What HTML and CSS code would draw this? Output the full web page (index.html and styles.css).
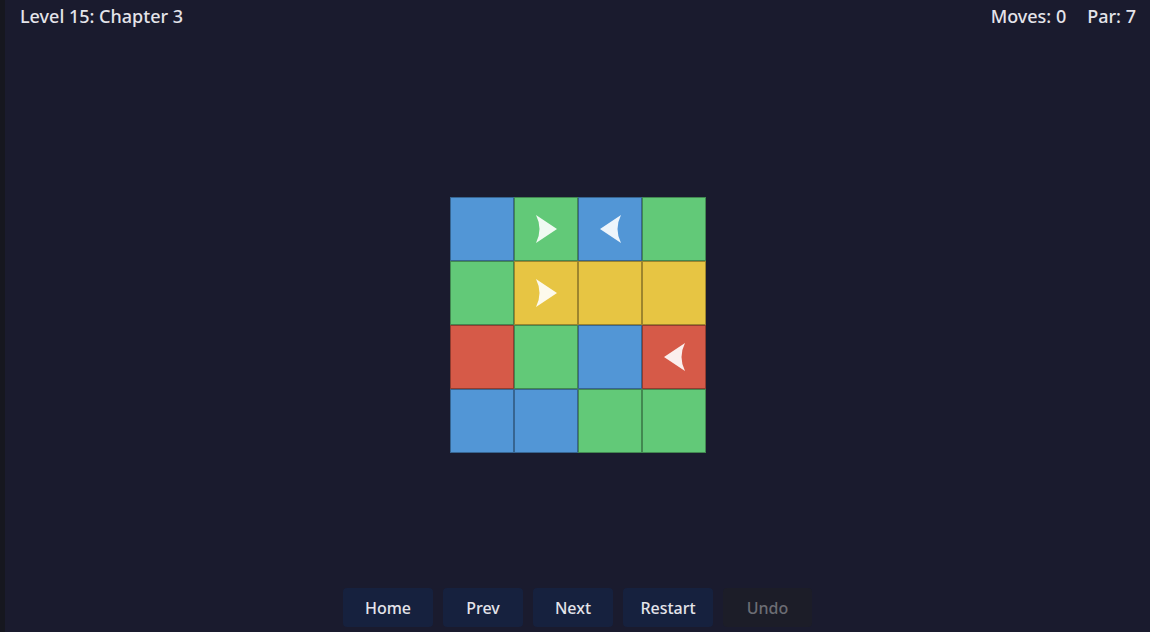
FILE: index.html
```html
<!DOCTYPE html>
<html>
<head>
<meta charset="utf-8">
<link rel="stylesheet" href="styles.css">
</head>
<body>
<div class="app">
  <div class="strip"></div>
  <div class="screen">
    <header class="topbar">
      <div class="title">Level 15: Chapter 3</div>
      <div class="stats"><span>Moves: 0</span><span>Par: 7</span></div>
    </header>
    <main class="board-area">
      <div class="board">
        <div class="cell blue"></div>
        <div class="cell green"><svg class="arrow" viewBox="0 0 21 28"><path d="M0 0 L21 14 L0 28 Q7 14 0 0 Z"/></svg></div>
        <div class="cell blue"><svg class="arrow left" viewBox="0 0 21 28"><path d="M21 0 L0 14 L21 28 Q14 14 21 0 Z"/></svg></div>
        <div class="cell green"></div>
        <div class="cell green"></div>
        <div class="cell yellow"><svg class="arrow" viewBox="0 0 21 28"><path d="M0 0 L21 14 L0 28 Q7 14 0 0 Z"/></svg></div>
        <div class="cell yellow"></div>
        <div class="cell yellow"></div>
        <div class="cell red"></div>
        <div class="cell green"></div>
        <div class="cell blue"></div>
        <div class="cell red"><svg class="arrow left" viewBox="0 0 21 28"><path d="M21 0 L0 14 L21 28 Q14 14 21 0 Z"/></svg></div>
        <div class="cell blue"></div>
        <div class="cell blue"></div>
        <div class="cell green"></div>
        <div class="cell green"></div>
      </div>
    </main>
    <footer class="controls">
      <button class="btn w90">Home</button>
      <button class="btn w80">Prev</button>
      <button class="btn w80">Next</button>
      <button class="btn w90">Restart</button>
      <button class="btn w89 disabled">Undo</button>
    </footer>
  </div>
</div>
</body>
</html>
```
FILE: styles.css
```css
* { box-sizing: border-box; }
html, body { margin: 0; padding: 0; }
body {
  width: 1150px;
  height: 632px;
  overflow: hidden;
  background: #1a1b2e;
  font-family: "Noto Sans", "Open Sans", sans-serif;
  color: #e4e4ea;
}
.app { display: flex; height: 632px; }
.strip { width: 5px; background: #16171f; }
.screen { flex: 1; display: flex; flex-direction: column; }
.topbar {
  height: 36px;
  display: flex;
  justify-content: space-between;
  align-items: flex-start;
  padding: 4px 14px 0 15px;
  font-size: 18px;
  font-weight: 500;
}
.stats { display: flex; gap: 21px; }
.board-area {
  flex: 1;
  display: flex;
  align-items: center;
  justify-content: center;
  padding-top: 34px;
  padding-left: 1px;
}
.board {
  display: grid;
  grid-template-columns: repeat(4, 64px);
  grid-template-rows: repeat(4, 64px);
}
.cell {
  border: 1px solid rgba(0, 0, 0, 0.32);
  display: flex;
  align-items: center;
  justify-content: center;
}
.blue { background: #5296d6; }
.green { background: #62c978; }
.yellow { background: #e7c543; }
.red { background: #d65a48; }
.arrow { width: 21px; height: 28px; fill: rgba(255, 255, 255, 0.9); }
.controls {
  display: flex;
  justify-content: center;
  gap: 10px;
  padding: 8px 0 5px 0;
}
.btn {
  height: 39px;
  border: none;
  border-radius: 4px;
  background: #16213e;
  color: #e4e4ea;
  font-family: "Noto Sans", "Open Sans", sans-serif;
  font-size: 16px;
  font-weight: 500;
  padding: 0;
}
.w90 { width: 90px; }
.w80 { width: 80px; }
.w89 { width: 89px; }
.btn.disabled { background: #1c1d28; color: #6c6d74; }
```
